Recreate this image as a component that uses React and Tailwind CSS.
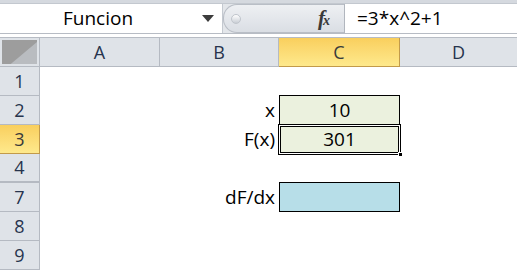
import React from "react";

const font = { fontFamily: '"Open Sans", "Noto Sans", sans-serif' };

function ColHeader({ label, w, active }) {
  return (
    <div
      className={
        "flex items-center justify-center h-full border-b border-r text-[18px] " +
        (active
          ? "bg-gradient-to-b from-[#f9cf5d] to-[#fee98c] border-[#c29a4a] text-[#3a3a3a]"
          : "bg-[#dfe3e8] border-[#b5bac2] text-[#27344d]")
      }
      style={{ width: w }}
    >
      {label}
    </div>
  );
}

function RowHeader({ label, active, thick }) {
  return (
    <div
      className={
        "w-[40px] h-full flex items-center justify-center border-r text-[18px] " +
        (thick ? "border-b-2 " : "border-b ") +
        (active
          ? "bg-gradient-to-b from-[#f9cf5d] to-[#fee98c] border-[#c29a4a] text-[#3a3a3a]"
          : "bg-[#dfe3e8] border-[#b5bac2] text-[#27344d]")
      }
    >
      {label}
    </div>
  );
}

function Row({ n, active, thick, label, cell }) {
  return (
    <div className="flex h-[29px]">
      <RowHeader label={n} active={active} thick={thick} />
      <div className="w-[120px] bg-white" />
      <div className="w-[119px] bg-white flex items-center justify-end pr-[4px] text-[19px] text-black">
        {label}
      </div>
      <div className="w-[122px] relative">{cell}</div>
      <div className="flex-1 bg-white" />
    </div>
  );
}

export default function App() {
  return (
    <div className="w-[517px] h-[271px] overflow-hidden bg-white" style={font}>
      {/* Formula bar */}
      <div className="h-[38px] bg-[#e3e6ea] flex flex-col">
        <div className="h-[4px] bg-[#d5d9df] border-b border-[#c3c8cf]" />
        <div className="h-[29px] flex">
          <div className="w-[223px] bg-white border-r border-[#c4c9d0] flex items-center relative">
            <span className="absolute left-[63px] text-[19px] text-black leading-none">Funcion</span>
            <svg className="absolute left-[202px] top-[11px]" width="12" height="7" viewBox="0 0 12 7">
              <polygon points="0,0 12,0 6,7" fill="#3c3c3c" />
            </svg>
          </div>
          <div className="flex-1 flex">
            <div className="w-[121px] h-full bg-gradient-to-b from-[#eef0f3] to-[#dadee4] border-l border-y border-[#b9bec6] rounded-l-[14px] relative flex items-center">
              <div className="absolute left-[7px] top-[9px] w-[10px] h-[10px] rounded-full bg-gradient-to-b from-[#ffffff] to-[#c9ced5] border border-[#c0c5cc]" />
              <span
                className="absolute left-[94px] top-[3px] text-[21px] italic font-bold text-[#3a3a3a] leading-none tracking-[-2px]"
                style={{ fontFamily: '"Liberation Serif", "DejaVu Serif", serif' }}
              >
                f<span className="text-[14px]">x</span>
              </span>
            </div>
            <div className="flex-1 bg-white border-l border-[#b1b6be] flex items-center pl-[12px] text-[19px] text-black">
              =3*x^2+1
            </div>
          </div>
        </div>
        <div className="h-[5px] bg-white border-t border-b border-[#b7bcc4]" />
      </div>

      {/* Column headers */}
      <div className="flex h-[29px]">
        <div className="w-[40px] h-full bg-[#dfe3e8] border-r border-b border-[#b5bac2] p-[2px]">
          <div className="w-full h-full bg-[#9d9d9d] relative overflow-hidden">
            <svg className="absolute inset-0" width="100%" height="100%" viewBox="0 0 36 25" preserveAspectRatio="none">
              <polygon points="36,2 36,25 9,25" fill="#b9bcc0" />
            </svg>
          </div>
        </div>
        <ColHeader label="A" w={120} />
        <ColHeader label="B" w={119} />
        <ColHeader label="C" w={121} active />
        <div className="flex-1 h-full flex items-center justify-center bg-[#dfe3e8] border-b border-[#b5bac2] text-[18px] text-[#27344d]">
          D
        </div>
      </div>

      <Row n="1" />
      <Row
        n="2"
        label="x"
        cell={
          <div className="absolute left-0 top-[-1px] w-[121px] h-[30px] border border-black bg-[#ebf1de] flex items-center justify-center text-[19px] text-black">
            10
          </div>
        }
      />
      <Row
        n="3"
        active
        label="F(x)"
        cell={
          <div className="absolute left-[-1px] top-[-1px] w-[123px] h-[31px] border border-black bg-white p-[1px]">
            <div className="w-full h-full border border-black bg-[#ebf1de] flex items-center justify-center text-[19px] text-black">
              301
            </div>
            <div className="absolute right-[-3px] bottom-[-3px] w-[5px] h-[5px] bg-black border border-white" />
          </div>
        }
      />
      <Row n="4" thick />
      <Row
        n="7"
        label="dF/dx"
        cell={
          <div className="absolute left-0 top-[-1px] w-[121px] h-[30px] border border-black bg-[#b7dee8]" />
        }
      />
      <Row n="8" />
      <Row n="9" />
    </div>
  );
}
